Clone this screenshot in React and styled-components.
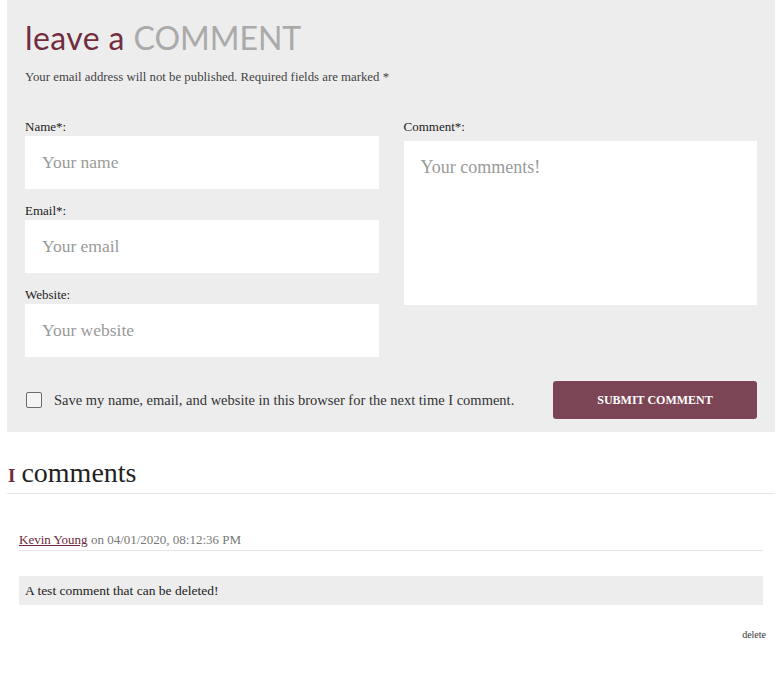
import React from 'react';
import styled, { createGlobalStyle } from 'styled-components';

const GlobalStyle = createGlobalStyle`
  body {
    margin: 0;
    background: #ffffff;
    font-family: 'Liberation Serif', 'DejaVu Serif', serif;
    color: #333333;
  }
  * { box-sizing: border-box; }
`;

const fields = [
  { label: 'Name*:', placeholder: 'Your name' },
  { label: 'Email*:', placeholder: 'Your email' },
  { label: 'Website:', placeholder: 'Your website' },
];

export default function App() {
  return (
    <Page>
      <GlobalStyle />
      <FormPanel>
        <Title>
          <span>leave a</span> <Accent>COMMENT</Accent>
        </Title>
        <Notice>Your email address will not be published. Required fields are marked *</Notice>
        <Columns>
          <Column>
            {fields.map((f) => (
              <Field key={f.label}>
                <Label>{f.label}</Label>
                <Input placeholder={f.placeholder} />
              </Field>
            ))}
          </Column>
          <Column>
            <Field>
              <Label>Comment*:</Label>
              <TextArea placeholder="Your comments!" />
            </Field>
          </Column>
        </Columns>
        <Footer>
          <CheckRow>
            <Box />
            <span>Save my name, email, and website in this browser for the next time I comment.</span>
          </CheckRow>
          <SubmitButton>SUBMIT COMMENT</SubmitButton>
        </Footer>
      </FormPanel>

      <CountHeading>
        <Count>I</Count>comments
      </CountHeading>

      <CommentList>
        <Meta>
          <Author href="#">Kevin Young</Author> on 04/01/2020, 08:12:36 PM
        </Meta>
        <Body>A test comment that can be deleted!</Body>
        <Actions>
          <DeleteLink>delete</DeleteLink>
        </Actions>
      </CommentList>
    </Page>
  );
}

const Page = styled.div`
  margin: 0 3px 0 7px;
`;

const FormPanel = styled.div`
  background: #ededed;
  padding: 18px 18px 13px;
`;

const Title = styled.h2`
  margin: 0;
  font-family: 'Lato', 'Open Sans', sans-serif;
  font-weight: 400;
  font-size: 32px;
  line-height: 40px;
  letter-spacing: 0.4px;
  color: #722c40;
`;

const Accent = styled.span`
  color: #aaaaaa;
  letter-spacing: 0;
`;

const Notice = styled.p`
  margin: 11px 0 0;
  font-size: 12.8px;
  line-height: 16px;
  color: #444444;
`;

const Columns = styled.div`
  display: grid;
  grid-template-columns: 1fr 1fr;
  column-gap: 25px;
  margin-top: 32px;
`;

const Column = styled.div`
  display: flex;
  flex-direction: column;
  gap: 12px;
`;

const Field = styled.div`
  display: flex;
  flex-direction: column;
`;

const Label = styled.label`
  font-size: 13px;
  line-height: 19px;
  color: #222222;
`;

const Input = styled.input`
  height: 53px;
  border: none;
  background: #ffffff;
  padding: 0 17px;
  font-family: inherit;
  font-size: 17.5px;
  outline: none;
  &::placeholder { color: #9a9a9a; }
`;

const TextArea = styled.textarea`
  height: 164px;
  margin-top: 5px;
  border: none;
  background: #ffffff;
  padding: 16px 17px;
  font-family: inherit;
  font-size: 18px;
  resize: none;
  outline: none;
  &::placeholder { color: #9a9a9a; }
`;

const Footer = styled.div`
  display: flex;
  align-items: center;
  justify-content: space-between;
  margin-top: 24px;
`;

const CheckRow = styled.label`
  display: flex;
  align-items: center;
  gap: 12px;
  font-size: 14.5px;
  color: #333333;
  padding-left: 1px;
`;

const Box = styled.span`
  flex: none;
  width: 16px;
  height: 16px;
  border: 1.5px solid #6b6b6b;
  border-radius: 2px;
  background: #f4f4f4;
`;

const SubmitButton = styled.button`
  flex: none;
  width: 204px;
  height: 38px;
  border: none;
  border-radius: 3px;
  background: #7c4555;
  color: #ffffff;
  font-family: inherit;
  font-weight: 700;
  font-size: 12px;
`;

const CountHeading = styled.h3`
  margin: 26px 0 0;
  padding-left: 1px;
  padding-bottom: 2px;
  border-bottom: 1px solid #e6e6e6;
  font-weight: 400;
  font-size: 28px;
  line-height: 30px;
  color: #222222;
`;

const Count = styled.span`
  color: #722c40;
  font-size: 19px;
  font-weight: 700;
  margin-right: 6px;
`;

const CommentList = styled.div`
  padding: 38px 12px 0;
`;

const Meta = styled.div`
  padding-bottom: 2px;
  border-bottom: 1px solid #e6e6e6;
  font-size: 13px;
  line-height: 16px;
  color: #777777;
`;

const Author = styled.a`
  color: #6e2a3b;
  text-decoration: underline;
`;

const Body = styled.div`
  margin-top: 25px;
  background: #ededed;
  padding: 0 6px;
  height: 29px;
  display: flex;
  align-items: center;
  font-size: 13.5px;
  color: #222222;
`;

const Actions = styled.div`
  display: flex;
  justify-content: flex-end;
  margin: 24px -3px 0 0;
`;

const DeleteLink = styled.span`
  font-size: 10px;
  color: #333333;
  cursor: pointer;
`;
